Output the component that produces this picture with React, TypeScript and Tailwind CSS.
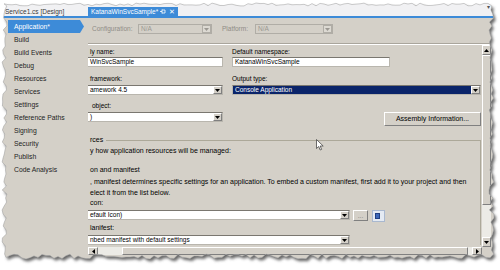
import React from 'react';

const jag = (i: number, seed: number) => {
  const v = Math.sin(i * 12.9898 + seed * 78.233) * 43758.5453;
  return v - Math.floor(v);
};

// torn paper outline around the screenshot
function tornPath() {
  const pts: [number, number][] = [];
  for (let x = 4; x <= 489; x += 4) pts.push([x, 3 + jag(x, 1) * 3]);
  for (let y = 6; y <= 254; y += 4) pts.push([489 + jag(y, 2) * 5, y]);
  for (let x = 490; x >= 6; x -= 4) pts.push([x, 254 + jag(x, 3) * 5]);
  for (let y = 254; y >= 6; y -= 4) pts.push([2 + jag(y, 4) * 5, y]);
  return 'M' + pts.map((p) => p[0].toFixed(1) + ' ' + p[1].toFixed(1)).join('L') + 'Z';
}

const navItems = [
  'Application*',
  'Build',
  'Build Events',
  'Debug',
  'Resources',
  'Services',
  'Settings',
  'Reference Paths',
  'Signing',
  'Security',
  'Publish',
  'Code Analysis',
];

const Tri = ({ dir = 'down' }: { dir?: 'down' | 'up' | 'left' | 'right' }) => {
  const d = {
    down: 'M0 0H5L2.5 3Z',
    up: 'M0 3H5L2.5 0Z',
    left: 'M3 0V5L0 2.5Z',
    right: 'M0 0V5L3 2.5Z',
  }[dir];
  const w = dir === 'down' || dir === 'up' ? 5 : 3;
  const h = dir === 'down' || dir === 'up' ? 3 : 5;
  return (
    <svg width={w} height={h} viewBox={`0 0 ${w} ${h}`}>
      <path d={d} fill="#000" />
    </svg>
  );
};

const bevel = 'bg-[#d4d0c8] border border-t-white border-l-white border-r-[#808080] border-b-[#808080]';

function DropButton() {
  return (
    <div className={`flex items-center justify-center w-[9px] h-[8px] shrink-0 ${bevel}`}>
      <Tri />
    </div>
  );
}

function TextBox({ text, className = '' }: { text: string; className?: string }) {
  return (
    <div className={`h-[10px] bg-white border border-[#b9b6ae] border-t-[#7a7770] pl-[2px] leading-[8px] whitespace-nowrap overflow-hidden ${className}`}>
      {text}
    </div>
  );
}

function Select({ text, className = '', dark = false }: { text: string; className?: string; dark?: boolean }) {
  return (
    <div
      className={`flex items-center h-[10px] border border-[#b9b6ae] border-t-[#7a7770] ${
        dark ? 'bg-[#0a246a] text-white' : 'bg-white'
      } ${className}`}
    >
      <span className="flex-1 pl-[2px] leading-[8px] whitespace-nowrap overflow-hidden">{text}</span>
      <DropButton />
    </div>
  );
}

function DisabledSelect({ className = '' }: { className?: string }) {
  return (
    <div className={`flex items-center h-[10px] border border-[#b0ada6] bg-[#d4d0c8] ${className}`}>
      <span className="flex-1 pl-[2px] leading-[8px] text-[#9b9892]">N/A</span>
      <div className="flex items-center justify-center w-[9px] h-[8px] border border-[#b0ada6] bg-[#dcd9d2]">
        <svg width="5" height="3" viewBox="0 0 5 3">
          <path d="M0 0H5L2.5 3Z" fill="#9b9892" />
        </svg>
      </div>
    </div>
  );
}

export default function App() {
  const torn = tornPath();
  const outside = `M0 0H500V270H0Z ${torn}`;

  return (
    <div className="relative w-[500px] h-[270px] overflow-hidden bg-white font-['Liberation_Sans',Arial,sans-serif] text-[6.5px] leading-[8px] text-black">
      <div className="flex flex-col w-[496px] h-[260px] bg-[#d4d0c8]">
        {/* Document tabs */}
        <div className="flex items-end h-[18px] shrink-0 bg-[#f1f1f3] border-b-2 border-[#3d8bd8] pl-[5px]">
          <div className="w-[83px] h-[9px] leading-[9px] text-[#3a3a3a]">Service1.cs [Design]</div>
          <div className="flex items-center w-[90px] h-[9px] bg-[#3d8bd8] text-white pl-[3px] pr-[3px]">
            <span className="leading-[9px]">KatanaWinSvcSample*</span>
            <svg className="ml-auto" width="6" height="5" viewBox="0 0 6 5">
              <path d="M0 2.5H2M2 0.5V4.5M2 1H5V4H2" stroke="#fff" strokeWidth="0.8" fill="none" />
            </svg>
            <span className="ml-[3px] text-[7px] leading-[9px]">✕</span>
          </div>
          <div className="ml-auto mr-[6px] mb-[6px] text-[6px] leading-[6px] text-[#555]">▾</div>
        </div>

        <div className="flex flex-1 min-h-0">
          {/* Left navigation */}
          <div className="w-[88px] shrink-0 pt-[2px] pl-[8px] text-[6.8px]">
            {navItems.map((item, i) =>
              i === 0 ? (
                <div key={item} className="flex h-[13px]">
                  <div className="w-[72px] h-[13px] bg-[#3d8bd8] text-white pl-[6px] leading-[13px]">{item}</div>
                  <svg width="4" height="13" viewBox="0 0 4 13">
                    <path d="M0 0L4 6.5L0 13Z" fill="#3d8bd8" />
                  </svg>
                </div>
              ) : (
                <div key={item} className="h-[13px] pl-[6px] leading-[13px] text-[#1e1e1e]">
                  {item}
                </div>
              )
            )}
          </div>

          {/* Property page */}
          <div className="flex flex-col flex-1 min-w-0">
            <div className="flex items-start h-[26px] shrink-0 pt-[6px] border-b border-[#a9a59c] text-[#8f8c86]">
              <span className="w-[46px] ml-[4px] leading-[10px]">Configuration:</span>
              <DisabledSelect className="w-[74px]" />
              <span className="w-[33px] ml-[10px] leading-[10px]">Platform:</span>
              <DisabledSelect className="w-[78px]" />
            </div>
            <div className="h-[1px] bg-white shrink-0" />

            <div className="flex h-[202px] shrink-0">
              {/* Scrolled content */}
              <div className="flex flex-col w-[394px] overflow-hidden pt-[3px]">
                <div className="flex gap-[9px]">
                  <div className="flex flex-col w-[135px]">
                    <span className="pl-[2px]">ly name:</span>
                    <TextBox className="mt-[1px] border-l-0" text="WinSvcSample" />
                  </div>
                  <div className="flex flex-col flex-1">
                    <span>Default namespace:</span>
                    <TextBox className="mt-[1px] w-[158px]" text="KatanaWinSvcSample" />
                  </div>
                </div>

                <div className="flex gap-[9px] mt-[8px]">
                  <div className="flex flex-col w-[135px]">
                    <span className="pl-[2px]">framework:</span>
                    <Select className="mt-[2px] border-l-0" text="amework 4.5" />
                  </div>
                  <div className="flex flex-col flex-1">
                    <span>Output type:</span>
                    <Select className="mt-[2px] w-[249px]" text="Console Application" dark />
                  </div>
                </div>

                <div className="flex gap-[9px] mt-[7px]">
                  <div className="flex flex-col w-[135px]">
                    <span className="pl-[4px]">object:</span>
                    <Select className="mt-[2px] border-l-0" text=")" />
                  </div>
                  <div className="flex flex-1 justify-end pr-[1px] pt-[10px]">
                    <button className={`w-[97px] h-[14px] text-[7px] leading-[12px] text-center ${bevel} border-r-[#404040] border-b-[#404040]`}>
                      Assembly Information...
                    </button>
                  </div>
                </div>

                {/* Resources group */}
                <div className="flex items-end h-[8px] mt-[10px] pr-[1px] text-[7px]">
                  <span className="pl-[2px] leading-[8px]">rces</span>
                  <div className="flex-1 h-[4px] ml-[3px] border-t border-r border-[#aca899]" />
                </div>
                <div className="flex flex-col mr-[1px] border-r border-[#aca899] text-[7px]">
                  <span className="pl-[2px] mt-[3px]">y how application resources will be managed:</span>
                  <span className="pl-[2px] mt-[11px]">on and manifest</span>
                  <p className="pl-[2px] mt-[2px] leading-[11px] whitespace-nowrap">
                    , manifest determines specific settings for an application. To embed a custom manifest, first add it to your project and then
                    <br />
                    elect it from the list below.
                  </p>
                  <span className="pl-[2px] mt-[1px]">con:</span>
                  <div className="flex items-start mt-[3px] text-[6.5px]">
                    <Select className="w-[262px] border-l-0" text="efault Icon)" />
                    <button className={`w-[15px] h-[11px] ml-[3px] leading-[8px] text-[#808080] ${bevel}`}>...</button>
                    <div className="flex w-[13px] h-[12px] ml-[4px] p-[2px] bg-[#e4eaf3] border border-[#a9b8cf]">
                      <div className="w-[5px] h-[6px] bg-[#3d67b8] border border-[#1f3f83]" />
                    </div>
                  </div>
                  <span className="pl-[2px] mt-[2px]">lanifest:</span>
                  <Select className="mt-[3px] w-[262px] border-l-0 text-[6.5px]" text="nbed manifest with default settings" />
                </div>
              </div>

              {/* Vertical scrollbar */}
              <div className="flex flex-col w-[9px] bg-[#ecebe6]">
                <div className={`flex items-center justify-center h-[10px] ${bevel}`}>
                  <Tri dir="up" />
                </div>
                <div className={`h-[150px] ${bevel}`} />
                <div className="flex-1" />
                <div className={`flex items-center justify-center h-[10px] ${bevel}`}>
                  <Tri />
                </div>
              </div>
            </div>

            {/* Horizontal scrollbar */}
            <div className="flex h-[8px] shrink-0 w-[394px] bg-[#ecebe6]">
              <div className={`flex items-center justify-center w-[10px] ${bevel}`}>
                <Tri dir="left" />
              </div>
              <div className="w-[24px]" />
              <div className={`flex-1 ${bevel}`} />
              <div className="w-[4px]" />
              <div className={`flex items-center justify-center w-[10px] ${bevel}`}>
                <Tri dir="right" />
              </div>
            </div>
          </div>
        </div>
      </div>

      {/* mouse pointer */}
      <svg className="absolute left-[316px] top-[139px]" width="8" height="12" viewBox="0 0 8 12">
        <path d="M0.5 0.5V9.5L2.7 7.5L4.2 11L5.6 10.4L4.2 7H7.2Z" fill="#fff" stroke="#333" strokeWidth="0.7" />
      </svg>

      {/* torn edge + shadow */}
      <svg className="absolute inset-0 pointer-events-none" width="500" height="270" viewBox="0 0 500 270">
        <defs>
          <filter id="soft" x="-5%" y="-5%" width="110%" height="110%">
            <feGaussianBlur stdDeviation="1.8" />
          </filter>
          <clipPath id="outside">
            <path d={outside} clipRule="evenodd" />
          </clipPath>
        </defs>
        <path d={outside} fill="#fff" fillRule="evenodd" />
        <g clipPath="url(#outside)">
          <path d={torn} transform="translate(2 2.5)" fill="#666" filter="url(#soft)" />
        </g>
        <path d={torn} fill="none" stroke="#9a9a9a" strokeWidth="0.5" />
      </svg>
    </div>
  );
}
